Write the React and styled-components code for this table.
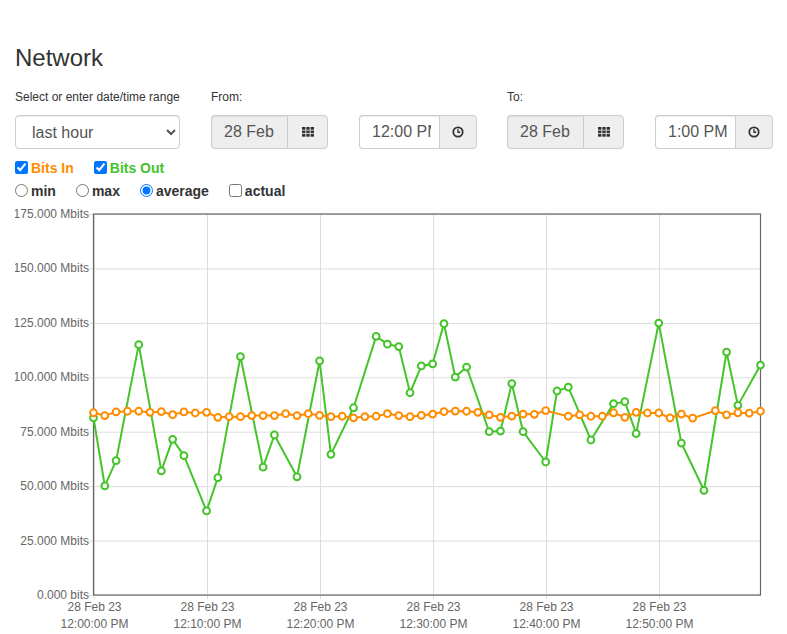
import React from 'react';
import styled, { createGlobalStyle } from 'styled-components';

const GlobalStyle = createGlobalStyle`
  body {
    margin: 0;
    background: #fff;
    color: #333;
    font-family: "Liberation Sans", Arial, sans-serif;
  }
`;

const Page = styled.div`
  padding: 0 15px;
`;

const Title = styled.h3`
  margin: 45px 0 18px;
  font-size: 24px;
  font-weight: 500;
  line-height: 1.1;
  color: #333;
`;

const Controls = styled.div`
  display: flex;
  gap: 31px;
`;

const Column = styled.div`
  display: flex;
  flex-direction: column;
  width: ${({ width }) => width}px;
`;

const FieldLabel = styled.label`
  font-size: 12px;
  line-height: 17px;
  margin-bottom: 9px;
`;

const Pair = styled.div`
  display: flex;
  gap: 31px;
`;

const Select = styled.select`
  height: 34px;
  width: 100%;
  padding: 6px 12px;
  font-family: inherit;
  font-size: 16px;
  color: #555;
  background: #fff;
  border: 1px solid #ccc;
  border-radius: 4px;
  box-shadow: inset 0 1px 1px rgba(0, 0, 0, 0.075);
`;

const InputGroup = styled.div`
  display: flex;
  height: 34px;
`;

const TextInput = styled.input`
  box-sizing: border-box;
  width: ${({ width }) => width}px;
  height: 34px;
  padding: 6px 8px 6px 12px;
  font-family: inherit;
  font-size: 16px;
  color: #555;
  background: ${({ readOnly }) => (readOnly ? '#eee' : '#fff')};
  border: 1px solid #ccc;
  border-right: 0;
  border-radius: 4px 0 0 4px;
  box-shadow: inset 0 1px 1px rgba(0, 0, 0, 0.075);
  outline: none;
`;

const Addon = styled.span`
  box-sizing: border-box;
  display: flex;
  align-items: center;
  justify-content: center;
  width: ${({ width }) => width}px;
  background: #eee;
  border: 1px solid #ccc;
  border-radius: 0 4px 4px 0;
  color: #333;
`;

const OptionRow = styled.div`
  display: flex;
  align-items: center;
  height: 23px;
  margin-top: ${({ first }) => (first ? '7px' : '0')};
`;

const Option = styled.label`
  display: inline-flex;
  align-items: center;
  margin-right: 20px;
  font-size: 14px;
  font-weight: bold;
  color: ${({ color }) => color || '#333'};

  input {
    margin: 0 3px 0 0;
    width: 13px;
    height: 13px;
  }
`;

const ChartSvg = styled.svg`
  display: block;
  margin-top: -1px;
  font-family: "Liberation Sans", Arial, sans-serif;
`;

const GridIcon = () => (
  <svg width="12" height="10" viewBox="0 0 12 10">
    {[0, 1, 2].map((r) =>
      [0, 1, 2].map((c) => (
        <rect key={`${r}-${c}`} x={c * 4.3} y={r * 3.5} width="3.4" height="2.7" fill="#333" />
      ))
    )}
  </svg>
);

const ClockIcon = () => (
  <svg width="12" height="12" viewBox="0 0 12 12">
    <circle cx="6" cy="6" r="4.7" fill="none" stroke="#333" strokeWidth="1.8" />
    <path d="M6 3.2 V6.3 H8.2" fill="none" stroke="#333" strokeWidth="1.4" />
  </svg>
);

const GREEN = '#45c42b';
const ORANGE = '#ff8c00';

const bitsOut = {
  0: 81.4, 1: 50.1, 2: 61.7, 4: 115.0, 6: 57.0, 7: 71.5, 8: 64.0, 10: 38.6, 11: 53.9,
  13: 109.5, 15: 58.7, 16: 73.5, 18: 54.3, 20: 107.5, 21: 64.6, 23: 86.0, 25: 118.8,
  26: 115.2, 27: 114.1, 28: 92.9, 29: 105.2, 30: 106.2, 31: 124.6, 32: 100.1, 33: 104.7,
  35: 75.0, 36: 75.3, 37: 97.1, 38: 75.0, 40: 61.1, 41: 93.7, 42: 95.5, 44: 71.2, 46: 87.9,
  47: 88.8, 48: 74.1, 50: 124.9, 52: 69.8, 54: 48.1, 56: 111.6, 57: 87.1, 59: 105.6,
};

const bitsIn = [
  83.7, 82.4, 84.1, 84.4, 84.4, 83.9, 84.2, 82.8, 84.1, 83.6,
  83.9, 81.6, 81.9, 81.9, 82.4, 82.4, 82.4, 83.3, 82.4, 83.3,
  82.5, 81.9, 82.1, 81.4, 81.9, 82.1, 83.3, 82.4, 81.9, 82.5,
  83.1, 84.2, 84.5, 84.4, 83.9, 82.7, 81.6, 82.2, 83.1, 83.0,
  84.7, null, 82.1, 82.7, 82.1, 82.1, 83.7, 81.6, 83.9, 83.6,
  83.6, 81.3, 83.1, 81.2, null, 84.7, 82.7, 83.7, 83.5, 84.4,
];

const chart = { w: 772, h: 434, left: 78.5, right: 745.5, top: 13, bottom: 394, max: 175 };
const xOf = (i) => chart.left + ((chart.right - chart.left) * i) / 59;
const yOf = (v) => chart.bottom - ((chart.bottom - chart.top) * v) / chart.max;

const yTicks = [175, 150, 125, 100, 75, 50, 25, 0];
const xTicks = ['12:00:00 PM', '12:10:00 PM', '12:20:00 PM', '12:30:00 PM', '12:40:00 PM', '12:50:00 PM'];

const Series = ({ points, color }) => (
  <g>
    <polyline
      points={points.map(([i, v]) => `${xOf(i)},${yOf(v)}`).join(' ')}
      fill="none"
      stroke={color}
      strokeWidth="2"
      strokeLinejoin="round"
    />
    {points.map(([i, v]) => (
      <circle key={i} cx={xOf(i)} cy={yOf(v)} r="3.4" fill="#fff" stroke={color} strokeWidth="2" />
    ))}
  </g>
);

const TrafficChart = () => {
  const outPoints = Object.entries(bitsOut).map(([i, v]) => [Number(i), v]);
  const inPoints = bitsIn.map((v, i) => [i, v]).filter(([, v]) => v !== null);

  return (
    <ChartSvg width={chart.w} height={chart.h}>
      {yTicks.map((t) => (
        <g key={t}>
          <line x1={chart.left - 5} x2={chart.right} y1={yOf(t) + 0.5} y2={yOf(t) + 0.5} stroke="#ddd" />
          <text x={chart.left - 4.5} y={yOf(t) + 4} textAnchor="end" fontSize="12" fill="#666">
            {t === 0 ? '0.000 bits' : `${t}.000 Mbits`}
          </text>
        </g>
      ))}
      {xTicks.map((t, k) => {
        const x = Math.round(xOf(k * 10)) + 0.5;
        return (
          <g key={t}>
            <line x1={x} x2={x} y1={chart.top} y2={chart.bottom + 4} stroke="#ddd" />
            <text x={x} y={chart.bottom + 16} textAnchor="middle" fontSize="12" fill="#666">
              28 Feb 23
            </text>
            <text x={x} y={chart.bottom + 33} textAnchor="middle" fontSize="12" fill="#666">
              {t}
            </text>
          </g>
        );
      })}
      <rect
        x={chart.left}
        y={chart.top}
        width={chart.right - chart.left}
        height={chart.bottom - chart.top}
        fill="none"
        stroke="#666"
        strokeWidth="1.2"
      />
      <Series points={outPoints} color={GREEN} />
      <Series points={inPoints} color={ORANGE} />
    </ChartSvg>
  );
};

const DateTime = ({ date, time }) => (
  <Pair>
    <InputGroup>
      <TextInput width={76} readOnly value={date} />
      <Addon width={41}>
        <GridIcon />
      </Addon>
    </InputGroup>
    <InputGroup>
      <TextInput width={80} defaultValue={time} />
      <Addon width={38}>
        <ClockIcon />
      </Addon>
    </InputGroup>
  </Pair>
);

const App = () => (
  <Page>
    <GlobalStyle />
    <Title>Network</Title>
    <Controls>
      <Column width={167}>
        <FieldLabel>Select or enter date/time range</FieldLabel>
        <Select defaultValue="hour">
          <option value="hour">last hour</option>
          <option value="day">last day</option>
          <option value="week">last week</option>
        </Select>
      </Column>
      <Column width={265}>
        <FieldLabel>From:</FieldLabel>
        <DateTime date="28 Feb 2023" time="12:00 PM" />
      </Column>
      <Column width={265}>
        <FieldLabel>To:</FieldLabel>
        <DateTime date="28 Feb 2023" time="1:00 PM" />
      </Column>
    </Controls>
    <OptionRow first>
      <Option color={ORANGE}>
        <input type="checkbox" defaultChecked />
        Bits In
      </Option>
      <Option color={GREEN}>
        <input type="checkbox" defaultChecked />
        Bits Out
      </Option>
    </OptionRow>
    <OptionRow>
      <Option>
        <input type="radio" name="agg" />
        min
      </Option>
      <Option>
        <input type="radio" name="agg" />
        max
      </Option>
      <Option>
        <input type="radio" name="agg" defaultChecked />
        average
      </Option>
      <Option>
        <input type="checkbox" />
        actual
      </Option>
    </OptionRow>
    <TrafficChart />
  </Page>
);

export default App;
